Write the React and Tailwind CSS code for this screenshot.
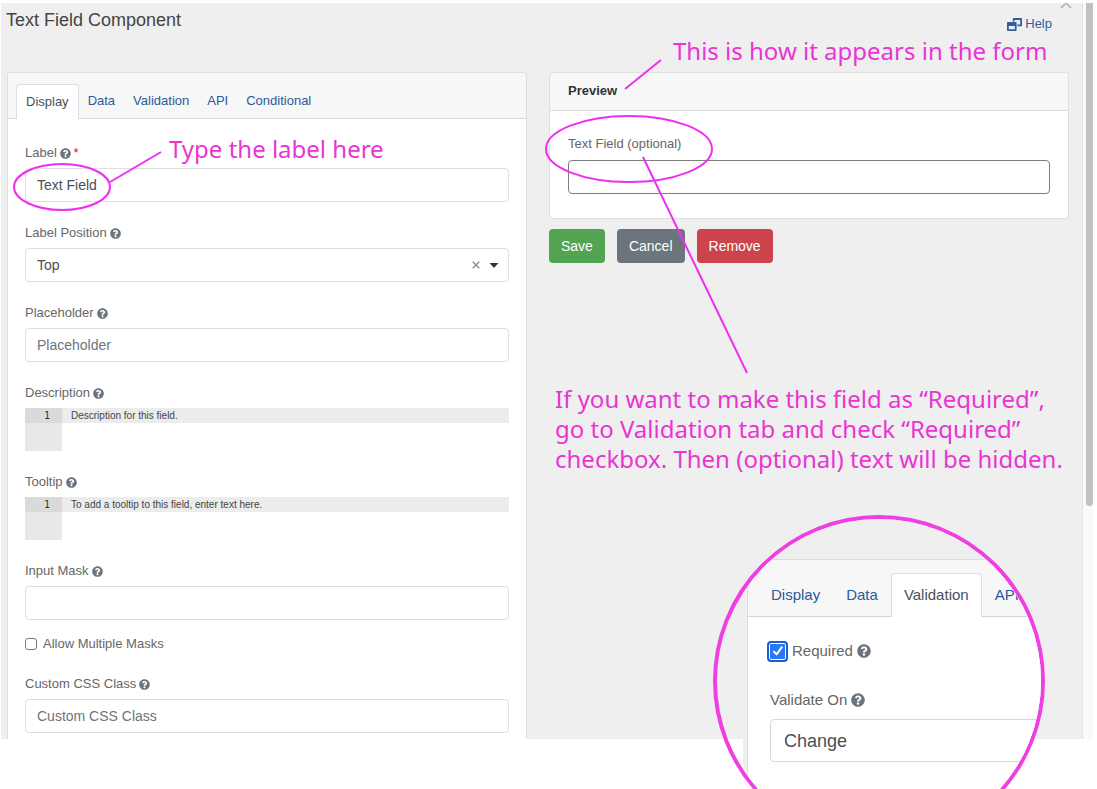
import React from "react";
import { FaQuestionCircle } from "react-icons/fa";

const HelpMark = ({ large }) => (
  <FaQuestionCircle
    aria-hidden="true"
    className={large ? "size-[14px] shrink-0 text-[#6c757d]" : "size-[11px] shrink-0 text-[#6c757d]"}
  />
);

const FieldLabel = ({ htmlFor, required, children }) => (
  <label htmlFor={htmlFor} className="flex h-5 items-center gap-[3px] pt-0.5 text-[13px] text-[#666]">
    {children}
    <HelpMark />
    {required && <span className="text-[12px] text-[#eb0000]">*</span>}
  </label>
);

const inputClass =
  "h-[34px] w-full rounded border border-[#dcdfe4] bg-white px-[11px] text-sm text-[#495057] placeholder:text-[#6c757d]";

const TextField = ({ id, label, required, ...rest }) => (
  <div className="flex flex-col gap-1.5">
    <FieldLabel htmlFor={id} required={required}>{label}</FieldLabel>
    <input id={id} type="text" className={inputClass} {...rest} />
  </div>
);

const Editor = ({ id, label, placeholder }) => (
  <div className="flex flex-col gap-1.5">
    <FieldLabel htmlFor={id}>{label}</FieldLabel>
    <div className="flex h-[43px]">
      <div className="w-[37px] bg-[#e8e8e8]">
        <div className="h-[15px] bg-[#dadada] pr-3 text-right font-['DejaVu_Sans_Mono',monospace] text-[10px] leading-[15px] text-[#333]">
          1
        </div>
      </div>
      <textarea
        id={id}
        placeholder={placeholder}
        className="h-[15px] flex-1 resize-none overflow-hidden bg-[#ececec] px-[9px] text-[10px] leading-[15px] text-[#444] placeholder:text-[#444]"
      />
    </div>
  </div>
);

const tabs = ["Display", "Data", "Validation", "API", "Conditional"];

const HelpIcon = () => (
  <svg aria-hidden="true" viewBox="0 0 15 13" className="h-[13px] w-[15px]" fill="currentColor">
    <path d="M6.6 0h7.6c.5 0 .8.3.8.8v6.7c0 .5-.3.8-.8.8h-3.8V6.4h2.8V2H7.6v1.4H5.8V.8c0-.5.3-.8.8-.8Z" />
    <path
      fillRule="evenodd"
      d="M.8 4h8c.5 0 .8.3.8.8v7.4c0 .5-.3.8-.8.8h-8c-.5 0-.8-.3-.8-.8V4.8c0-.5.3-.8.8-.8Zm1 4v3.3h6V8h-6Z"
    />
  </svg>
);

const noteClass = "absolute font-['Noto_Sans',sans-serif] text-2xl leading-[30px] whitespace-nowrap text-[#e835d3]";

function Annotations() {
  return (
    <>
      <svg
        aria-hidden="true"
        className="pointer-events-none absolute top-0 left-0 h-[400px] w-[800px]"
        viewBox="0 0 800 400"
        fill="none"
        stroke="#ee2ff0"
        strokeWidth="2"
      >
        <ellipse cx="62" cy="187" rx="48" ry="23" />
        <path d="M110 182 161 152" />
        <ellipse cx="629" cy="149" rx="83" ry="33" />
        <path d="M625 89 661 60" />
        <path d="M643 157 747 373" />
      </svg>
      <p className={`${noteClass} top-[134px] left-[169px]`}>Type the label here</p>
      <p className={`${noteClass} top-[36px] left-[673px]`}>This is how it appears in the form</p>
      <p className={`${noteClass} top-[384px] left-[555px]`}>
        If you want to make this field as “Required”,
        <br />
        go to Validation tab and check “Required”
        <br />
        checkbox. Then (optional) text will be hidden.
      </p>
    </>
  );
}

function ValidationLens() {
  const linkClass = "h-[43px] px-[13px] pt-[11px] text-[#2a5a9c]";
  return (
    <section
      aria-label="Validation tab"
      className="absolute top-[515px] left-[713px] size-[332px] overflow-hidden rounded-full border-4 border-[#f03ee3]"
    >
      <div className="ml-[26px] h-full w-[400px] bg-[#efefef] pt-10 pl-1">
        <div className="h-full border border-[#dcdcdc] bg-white">
          <nav className="flex h-[57px] items-end border-b border-[#d6d6d6] bg-[#f7f7f7] pl-[10px] text-[15px]">
            <a href="#display" className={linkClass}>Display</a>
            <a href="#data" className={linkClass}>Data</a>
            <a
              href="#validation"
              className="-mb-px h-11 rounded-t border border-b-0 border-[#dcdfe4] bg-white px-3 pt-[10px] text-[#495057]"
            >
              Validation
            </a>
            <a href="#api" className={linkClass}>API</a>
          </nav>
          <div className="flex flex-col pt-[22px] pl-[22px]">
            <label className="-ml-[3px] flex h-6 items-center gap-1 text-[15px] text-[#666]">
              <span className="relative grid size-[21px] place-items-center">
                <input
                  type="checkbox"
                  defaultChecked
                  className="size-[21px] appearance-none rounded border-2 border-[#1d60cc] bg-[#2a78f6] ring-1 ring-white ring-inset"
                />
                <svg
                  aria-hidden="true"
                  viewBox="0 0 12 12"
                  className="pointer-events-none absolute size-3"
                  fill="none"
                  stroke="white"
                  strokeWidth="2"
                  strokeLinecap="round"
                  strokeLinejoin="round"
                >
                  <path d="M2 6.7 4.6 9.4 9.8 2.2" />
                </svg>
              </span>
              Required
              <HelpMark large />
            </label>
            <label htmlFor="validateOn" className="mt-[25px] flex h-6 items-center gap-1 text-[15px] text-[#666]">
              Validate On
              <HelpMark large />
            </label>
            <select
              id="validateOn"
              className="mt-[7px] h-[43px] appearance-none rounded border border-[#d5d9df] bg-white px-[13px] text-lg text-[#495057]"
            >
              <option>Change</option>
            </select>
          </div>
        </div>
      </div>
    </section>
  );
}

export default function App() {
  return (
    <div className="relative min-h-screen overflow-hidden bg-white pt-[3px] pr-1 pl-px font-['Liberation_Sans',Arial,sans-serif]">
      <div className="flex">
        <main className="min-w-0 flex-1 border-r border-[#e2e2e2] bg-[#efefef] pr-[13px] pl-[5px]">
          <header className="flex h-[69px] items-start justify-between">
            <h1 className="pt-[5px] text-[18px] leading-6 font-normal text-[#444]">Text Field Component</h1>
            <div className="relative pt-[11px] pr-[17px]">
              <a href="#help" className="flex items-center gap-[3px] text-[13px] leading-5 text-[#2f5f9e]">
                <HelpIcon />
                Help
              </a>
              <button type="button" aria-label="Close" className="absolute top-0 -right-[3px] flex h-2 w-3">
                <svg aria-hidden="true" viewBox="0 0 12 8" className="h-2 w-3" fill="none" stroke="#b9b9b9" strokeWidth="1.8">
                  <path d="M1 5 6 .2 11 5" />
                </svg>
              </button>
            </div>
          </header>

          <div className="grid grid-cols-2 gap-[22px] pl-px">
            <section className="rounded-t border border-b-0 border-[#dfdfdf] bg-white pb-1.5">
              <nav className="flex h-[46px] items-end rounded-t border-b border-[#d8d8d8] bg-[#f7f7f7] pl-2 text-[13px]">
                {tabs.map((t, i) => (
                  <a
                    key={t}
                    href={`#${t.toLowerCase()}`}
                    className={
                      i === 0
                        ? "-mb-px h-[35px] rounded-t border border-b-0 border-[#dcdfe4] bg-white px-[9px] pt-[7px] text-[#495057]"
                        : "h-[34px] px-[9px] pt-[7px] text-[#2a5a9c]"
                    }
                  >
                    {t}
                  </a>
                ))}
              </nav>
              <form className="flex flex-col gap-5 px-[17px] pt-[23px]">
                <TextField id="label" label="Label" required defaultValue="Text Field" />
                <div className="flex flex-col gap-1.5">
                  <FieldLabel htmlFor="position">Label Position</FieldLabel>
                  <div className="relative">
                    <select id="position" className={`${inputClass} appearance-none`}>
                      <option>Top</option>
                    </select>
                    <div className="absolute inset-y-0 right-[10px] flex items-center gap-2">
                      <button type="button" aria-label="Clear" className="p-px">
                        <svg aria-hidden="true" viewBox="0 0 8 8" className="size-2" stroke="#8a8a8a" strokeWidth="1.3">
                          <path d="M.8.8 7.2 7.2M7.2.8.8 7.2" />
                        </svg>
                      </button>
                      <svg aria-hidden="true" viewBox="0 0 10 5" className="h-[5px] w-[10px]" fill="#333">
                        <path d="M.6 0h8.8L5.4 4.6a.6.6 0 0 1-.8 0Z" />
                      </svg>
                    </div>
                  </div>
                </div>
                <TextField id="placeholder" label="Placeholder" placeholder="Placeholder" />
                <Editor id="description" label="Description" placeholder="Description for this field." />
                <Editor id="tooltip" label="Tooltip" placeholder="To add a tooltip to this field, enter text here." />
                <div className="flex flex-col gap-[13px]">
                  <TextField id="mask" label="Input Mask" />
                  <label className="flex h-5 items-center gap-1.5 pt-0.5 text-[13px] text-[#666]">
                    <input
                      type="checkbox"
                      className="size-3 appearance-none rounded-[3px] border border-[#767676] bg-white"
                    />
                    Allow Multiple Masks
                  </label>
                </div>
                <TextField id="cssClass" label="Custom CSS Class" placeholder="Custom CSS Class" />
              </form>
            </section>

            <div>
              <section className="rounded border border-[#dfdfdf] bg-white">
                <h2 className="h-[38px] rounded-t border-b border-[#dcdcdc] bg-[#f7f7f7] px-[18px] text-[13px] leading-[36px] font-bold text-[#333]">
                  Preview
                </h2>
                <div className="flex flex-col gap-1.5 px-[18px] pt-[23px] pb-6">
                  <label htmlFor="preview" className="text-[13px] leading-5 text-[#666]">
                    Text Field (optional)
                  </label>
                  <input id="preview" type="text" className="h-[34px] w-full rounded border border-[#7d7d7d] bg-white px-3 text-sm" />
                </div>
              </section>
              <div className="mt-[10px] flex gap-3 text-sm text-white">
                <button type="button" className="h-[34px] rounded bg-[#52a452] px-3">Save</button>
                <button type="button" className="h-[34px] rounded bg-[#6c757d] px-3">Cancel</button>
                <button type="button" className="h-[34px] rounded bg-[#cd434b] px-3">Remove</button>
              </div>
            </div>
          </div>
        </main>
        <div aria-hidden="true" className="w-[10px] bg-[#fafafa] pl-[3px]">
          <div className="h-[503px] rounded-b-full bg-[#c1c1c1]" />
        </div>
      </div>
      <Annotations />
      <ValidationLens />
    </div>
  );
}
